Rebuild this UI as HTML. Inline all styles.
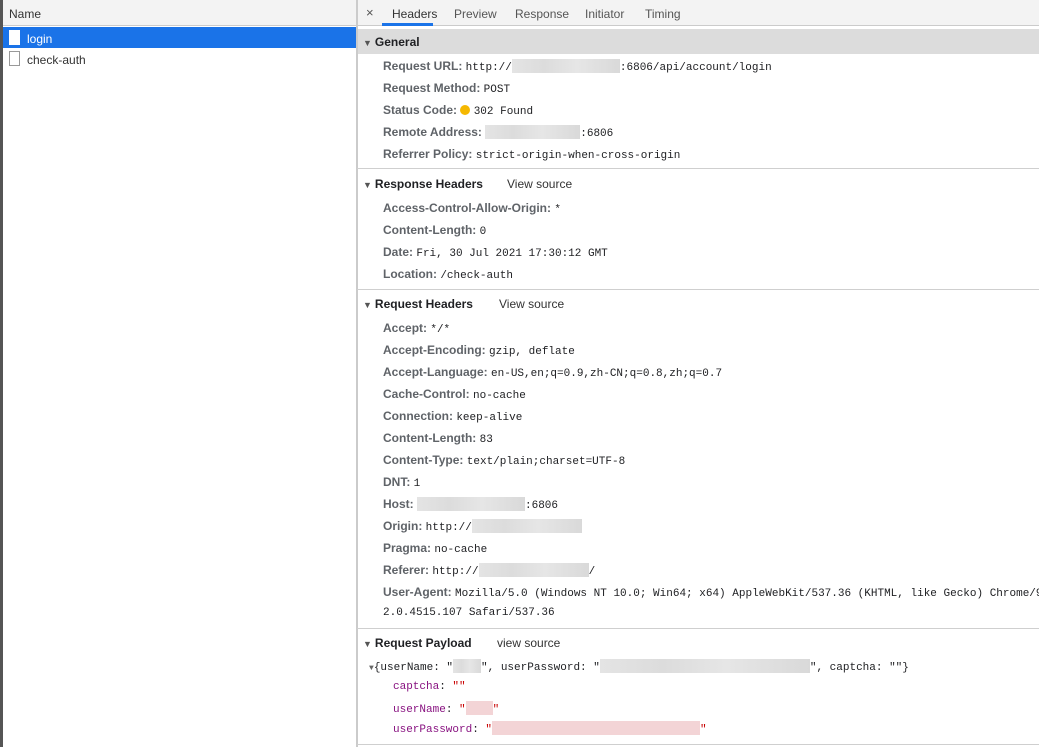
<!DOCTYPE html>
<html><head><style>
*{margin:0;padding:0;box-sizing:border-box}
body{width:1039px;height:747px;overflow:hidden;background:#fff;font-family:"Liberation Sans",sans-serif;font-size:12px;color:#303942;position:relative}
.a{position:absolute;white-space:nowrap}
.lbl{font-weight:bold;color:#5f6368}
.m{font-family:"Liberation Mono",monospace;font-size:11px;color:#202124}
.blur{display:inline-block;height:14px;vertical-align:-3px;background:linear-gradient(90deg,#e4e4e4,#dcdcdc 30%,#e6e6e6 60%,#d9d9d9)}
.pb{display:inline-block;height:14px;vertical-align:-3px;background:#f3d4d6}
.sec{font-weight:bold;color:#202124}
.tri{font-size:9px;color:#555;margin-right:3px}
.vs{position:absolute;color:#333}
.hr{position:absolute;left:357px;right:0;height:1px;background:#cfcfcf}
.k{color:#881280}.s{color:#c80000}
</style></head><body>
<div class="a" style="left:0;top:0;width:3px;height:747px;background:#555"></div>
<div class="a" style="left:3px;top:0;width:353px;height:26px;background:#f3f3f3;border-bottom:1px solid #cbcbcb"></div>
<div class="a" style="left:9px;top:7px;color:#333">Name</div>
<div class="a" style="left:3px;top:27px;width:353px;height:21px;background:#1a73e8"></div>
<div class="a" style="left:9px;top:30px;width:11px;height:15px;background:#fff;border:1px solid #fff"></div>
<div class="a" style="left:27px;top:32px;color:#fff">login</div>
<div class="a" style="left:9px;top:51px;width:11px;height:15px;border:1px solid #999;background:#fff"></div>
<div class="a" style="left:27px;top:53px;color:#333">check-auth</div>
<div class="a" style="left:356px;top:0;width:2px;height:747px;background:#cbcbcb"></div>
<div class="a" style="left:358px;top:0;width:681px;height:26px;background:#f3f3f3;border-bottom:1px solid #cbcbcb"></div>
<div class="a" style="left:366px;top:5px;color:#555;font-size:13px">×</div>
<div class="a" style="left:392px;top:7px;color:#333">Headers</div>
<div class="a" style="left:382px;top:23px;width:51px;height:3px;background:#1a73e8"></div>
<div class="a" style="left:454px;top:7px;color:#555">Preview</div>
<div class="a" style="left:515px;top:7px;color:#555">Response</div>
<div class="a" style="left:585px;top:7px;color:#555">Initiator</div>
<div class="a" style="left:645px;top:7px;color:#555">Timing</div>
<div class="a" style="left:358px;top:29px;width:681px;height:25px;background:#dcdcdc"></div>
<div class="a sec" style="left:363px;top:35px"><span class="tri">▼</span>General</div>
<div class="a" style="left:383px;top:59px"><span class="lbl">Request URL: </span><span class="m">http://<span class="blur" style="width:108px"></span>:6806/api/account/login</span></div>
<div class="a" style="left:383px;top:81px"><span class="lbl">Request Method: </span><span class="m">POST</span></div>
<div class="a" style="left:383px;top:103px"><span class="lbl">Status Code: </span><span style="display:inline-block;width:10px;height:10px;border-radius:50%;background:#f5b800;vertical-align:-1px"></span> <span class="m">302 Found</span></div>
<div class="a" style="left:383px;top:125px"><span class="lbl">Remote Address: </span><span class="blur" style="width:95px"></span><span class="m">:6806</span></div>
<div class="a" style="left:383px;top:147px"><span class="lbl">Referrer Policy: </span><span class="m">strict-origin-when-cross-origin</span></div>
<div class="hr" style="top:168px"></div>
<div class="a sec" style="left:363px;top:177px"><span class="tri">▼</span>Response Headers</div>
<div class="vs" style="left:507px;top:177px">View source</div>
<div class="a" style="left:383px;top:201px"><span class="lbl">Access-Control-Allow-Origin: </span><span class="m">*</span></div>
<div class="a" style="left:383px;top:223px"><span class="lbl">Content-Length: </span><span class="m">0</span></div>
<div class="a" style="left:383px;top:245px"><span class="lbl">Date: </span><span class="m">Fri, 30 Jul 2021 17:30:12 GMT</span></div>
<div class="a" style="left:383px;top:267px"><span class="lbl">Location: </span><span class="m">/check-auth</span></div>
<div class="hr" style="top:289px"></div>
<div class="a sec" style="left:363px;top:297px"><span class="tri">▼</span>Request Headers</div>
<div class="vs" style="left:499px;top:297px">View source</div>
<div class="a" style="left:383px;top:321px"><span class="lbl">Accept: </span><span class="m">*/*</span></div>
<div class="a" style="left:383px;top:343px"><span class="lbl">Accept-Encoding: </span><span class="m">gzip, deflate</span></div>
<div class="a" style="left:383px;top:365px"><span class="lbl">Accept-Language: </span><span class="m">en-US,en;q=0.9,zh-CN;q=0.8,zh;q=0.7</span></div>
<div class="a" style="left:383px;top:387px"><span class="lbl">Cache-Control: </span><span class="m">no-cache</span></div>
<div class="a" style="left:383px;top:409px"><span class="lbl">Connection: </span><span class="m">keep-alive</span></div>
<div class="a" style="left:383px;top:431px"><span class="lbl">Content-Length: </span><span class="m">83</span></div>
<div class="a" style="left:383px;top:453px"><span class="lbl">Content-Type: </span><span class="m">text/plain;charset=UTF-8</span></div>
<div class="a" style="left:383px;top:475px"><span class="lbl">DNT: </span><span class="m">1</span></div>
<div class="a" style="left:383px;top:497px"><span class="lbl">Host: </span><span class="blur" style="width:108px"></span><span class="m">:6806</span></div>
<div class="a" style="left:383px;top:519px"><span class="lbl">Origin: </span><span class="m">http://</span><span class="blur" style="width:110px"></span></div>
<div class="a" style="left:383px;top:541px"><span class="lbl">Pragma: </span><span class="m">no-cache</span></div>
<div class="a" style="left:383px;top:563px"><span class="lbl">Referer: </span><span class="m">http://</span><span class="blur" style="width:110px"></span><span class="m">/</span></div>
<div class="a" style="left:383px;top:585px"><span class="lbl">User-Agent: </span><span class="m">Mozilla/5.0 (Windows NT 10.0; Win64; x64) AppleWebKit/537.36 (KHTML, like Gecko) Chrome/92</span></div>
<div class="a m" style="left:383px;top:607px">2.0.4515.107 Safari/537.36</div>
<div class="hr" style="top:628px"></div>
<div class="a sec" style="left:363px;top:636px"><span class="tri">▼</span>Request Payload</div>
<div class="vs" style="left:497px;top:636px">view source</div>
<div class="a m" style="left:369px;top:659px"><span style="font-size:8px;color:#666">▼</span>{userName: "<span class="blur" style="width:28px"></span>", userPassword: "<span class="blur" style="width:210px"></span>", captcha: ""}</div>
<div class="a m" style="left:393px;top:681px"><span class="k">captcha</span>: <span class="s">""</span></div>
<div class="a m" style="left:393px;top:701px"><span class="k">userName</span>: <span class="s">"<span class="pb" style="width:27px"></span>"</span></div>
<div class="a m" style="left:393px;top:721px"><span class="k">userPassword</span>: <span class="s">"<span class="pb" style="width:208px"></span>"</span></div>
<div class="hr" style="top:744px"></div>
</body></html>
